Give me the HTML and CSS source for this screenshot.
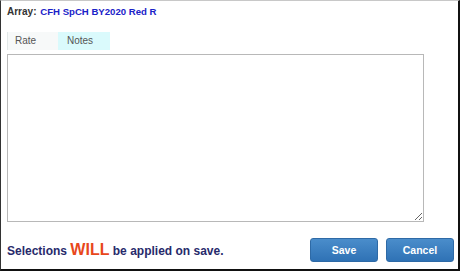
FILE: index.html
```html
<!DOCTYPE html>
<html>
<head>
<meta charset="utf-8">
<link rel="stylesheet" href="styles.css">
</head>
<body>
<div class="frame">
  <div class="header">
    <span class="label">Array:</span>
    <span class="value">CFH SpCH BY2020 Red R</span>
  </div>
  <div class="tabs">
    <div class="tab tab-rate">Rate</div>
    <div class="tab tab-notes">Notes</div>
  </div>
  <textarea class="notes"></textarea>
  <div class="footer">
    <div class="msg">Selections <span class="will">WILL</span> be applied on save.</div>
    <div class="buttons">
      <button class="btn">Save</button>
      <button class="btn">Cancel</button>
    </div>
  </div>
</div>
</body>
</html>
```
FILE: styles.css
```css
html, body { margin: 0; padding: 0; background: #fff; }
.frame {
  box-sizing: border-box;
  width: 460px;
  height: 271px;
  border-top: 1px solid #c8c8c8;
  border-left: 1px solid #333;
  border-right: 2px solid #111;
  border-bottom: 2px solid #111;
  font-family: "Liberation Sans", Arial, sans-serif;
  padding: 0 0 0 6px;
  display: flex;
  flex-direction: column;
}
.header {
  height: 20px;
  padding-top: 4px;
  font-size: 10px;
  font-weight: bold;
  line-height: 14px;
}
.label { color: #333; margin-right: 1px; }
.value { color: #1a22c8; font-size: 9.6px; }
.tabs {
  display: flex;
  margin-top: 7px;
  height: 18px;
}
.tab {
  font-size: 10px;
  color: #555;
  line-height: 18px;
  box-sizing: border-box;
}
.tab-rate {
  width: 51px;
  padding-left: 7px;
  background: #f7f9f9;
  border-left: 1px solid #e2e8e8;
}
.tab-notes {
  width: 52px;
  padding-left: 9px;
  background: #dafafc;
}
.notes {
  box-sizing: border-box;
  width: 417px;
  height: 168px;
  margin: 4px 0 0 0;
  border: 1px solid #b8b8b8;
  padding: 2px;
  resize: both;
  background: #fff;
}
.footer {
  display: flex;
  align-items: center;
  justify-content: space-between;
  margin-top: 16px;
  padding-right: 4px;
}
.msg {
  color: #272a6b;
  font-size: 12px;
  font-weight: bold;
}
.will {
  color: #e8471b;
  font-size: 16px;
}
.buttons { display: flex; gap: 8px; }
.btn {
  width: 68px;
  height: 24px;
  border: 1px solid #2e6aa6;
  border-radius: 3px;
  background: linear-gradient(#4a8dcb, #2f72b5);
  color: #fff;
  font-family: "Liberation Sans", Arial, sans-serif;
  font-size: 10.5px;
  font-weight: bold;
  padding: 0;
}
```
